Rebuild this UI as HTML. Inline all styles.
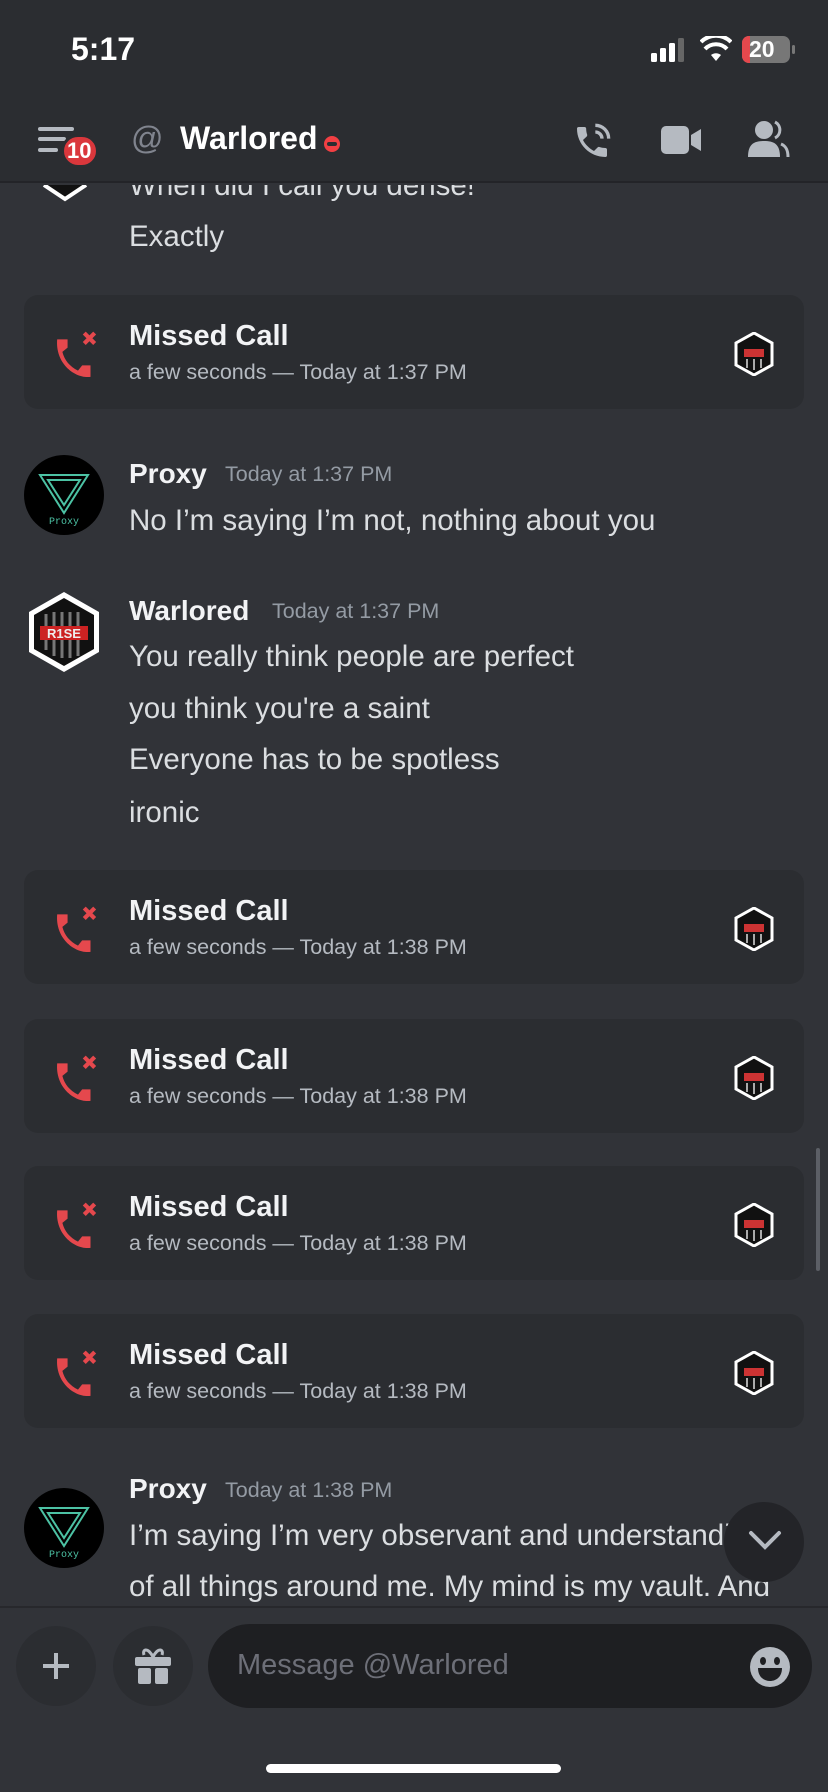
<!DOCTYPE html>
<html><head><meta charset="utf-8"><style>
*{margin:0;padding:0;box-sizing:border-box}
body{width:828px;height:1792px;background:#313338;font-family:"Liberation Sans",sans-serif;color:#dbdee1;position:relative;overflow:hidden}
.abs{position:absolute}
.top{left:0;top:0;width:828px;height:183px;background:#2b2d31;border-bottom:2px solid #232428}
.t{position:absolute;white-space:nowrap}
.msg{font-size:29.5px;color:#dbdee1}
.name{font-size:28px;font-weight:bold;color:#f2f3f5}
.ts{font-size:21.5px;color:#949ba4}
.card{position:absolute;left:24px;width:780px;height:114px;background:#2b2d31;border-radius:14px}
.card .ti{left:105px;top:25px;font-size:29px;font-weight:bold;color:#f2f3f5}
.card .su{left:105px;top:65px;font-size:21.5px;color:#b5bac1}
.card .ic{position:absolute;left:30px;top:36px}
.card .av{position:absolute;left:710px;top:37px}
</style></head><body>
<div class="abs top"></div>
<div class="t" style="left:71px;top:31px;font-size:32px;font-weight:bold;color:#fff">5:17</div>
<svg class="abs" style="left:651px;top:38px" width="40" height="24"><rect x="0" y="15" width="6" height="9" rx="1.5" fill="#fff"/><rect x="9" y="10" width="6" height="14" rx="1.5" fill="#fff"/><rect x="18" y="5" width="6" height="19" rx="1.5" fill="#fff"/><rect x="27" y="0" width="6" height="24" rx="1.5" fill="#666"/></svg>
<svg class="abs" style="left:700px;top:36px" width="32" height="26" viewBox="0 0 32 26"><path d="M16 25 L11 19 A8 8 0 0 1 21 19 Z" fill="#fff"/><path d="M5 13 A15 15 0 0 1 27 13" stroke="#fff" stroke-width="4" fill="none"/><path d="M1 7 A21 21 0 0 1 31 7" stroke="#fff" stroke-width="4" fill="none" transform="translate(0,-1)"/></svg>
<div class="abs" style="left:742px;top:36px;width:48px;height:27px;border-radius:7px;background:#777;overflow:hidden"><div style="width:8px;height:27px;background:#e5484d"></div></div>
<div class="abs" style="left:792px;top:45px;width:3px;height:9px;background:#777;border-radius:2px"></div>
<div class="t" style="left:749px;top:36px;font-size:23px;font-weight:bold;color:#fff">20</div>
<svg class="abs" style="left:38px;top:127px" width="40" height="30"><rect x="0" y="0" width="36" height="4" rx="2" fill="#b5bac1"/><rect x="0" y="10" width="28" height="4" rx="2" fill="#b5bac1"/><rect x="0" y="21" width="20" height="4" rx="2" fill="#b5bac1"/></svg>
<div class="abs" style="left:61px;top:134px;width:38px;height:34px;border-radius:17px;background:#da373c;border:3px solid #2b2d31"></div>
<div class="t" style="left:67px;top:138px;font-size:22px;font-weight:bold;color:#fff">10</div>
<div class="t" style="left:131px;top:120px;font-size:32px;color:#80848e">@</div>
<div class="t" style="left:180px;top:120px;font-size:32px;font-weight:bold;color:#fff">Warlored</div>
<div class="abs" style="left:324px;top:136px;width:16px;height:16px;border-radius:8px;background:#f23f43"><div style="margin:6px 3px;height:4px;background:#2b2d31;border-radius:2px"></div></div>
<svg class="abs" style="left:572px;top:122px" width="40" height="40" viewBox="0 0 24 24"><path d="M6.6 10.8c1.4 2.8 3.8 5.1 6.6 6.6l2.2-2.2c.3-.3.7-.4 1-.2 1.1.4 2.3.6 3.6.6.6 0 1 .4 1 1V20c0 .6-.4 1-1 1C10.6 21 3 13.4 3 4c0-.6.4-1 1-1h3.5c.6 0 1 .4 1 1 0 1.3.2 2.5.6 3.6.1.3 0 .7-.2 1z" fill="#b5bac1"/><path d="M14 2a8 8 0 0 1 8 8M14 6a4 4 0 0 1 4 4" stroke="#b5bac1" stroke-width="2" fill="none"/></svg>
<svg class="abs" style="left:661px;top:124px" width="42" height="32" viewBox="0 0 42 32"><rect x="0" y="2" width="28" height="28" rx="5" fill="#b5bac1"/><path d="M30 11 L40 5 V27 L30 21Z" fill="#b5bac1"/></svg>
<svg class="abs" style="left:748px;top:120px" width="42" height="38" viewBox="0 0 42 38"><circle cx="16" cy="10" r="9" fill="#b5bac1"/><path d="M0 37 C0 24 6 21 16 21 C26 21 32 24 32 37Z" fill="#b5bac1"/><path d="M27 2 A9 9 0 0 1 27 18 M33 24 C38 26 40 30 40 37" stroke="#b5bac1" stroke-width="3" fill="none"/></svg>
<div style="position:absolute;left:0;top:185px;width:828px;height:1420px;overflow:hidden">
<div class="t msg" style="left:129px;top:-16px">When did I call you dense!</div>
<div class="t msg" style="left:129px;top:35px">Exactly</div>
</div>
<svg class="abs" style="left:40px;top:185px" width="50" height="18"><path d="M4 0 L25 14 L46 0" stroke="#fff" stroke-width="4" fill="#111"/></svg>

<div class="card" style="top:295px"><svg class="ic" width="48" height="50" viewBox="0 0 44 48"><path d="M2 6 L12 6 L12 14 L7 18 C9 26 14 32 22 36 L26 31 L34 31 L34 42 C20 44 0 30 2 6Z" fill="#e5484d" transform="translate(0,2)"/><path d="M28 2 L38 12 M38 2 L28 12" stroke="#e5484d" stroke-width="4"/></svg><div class="t ti">Missed Call</div><div class="t su">a few seconds — Today at 1:37 PM</div>
<svg class="av" width="40" height="44" viewBox="0 0 40 44"><path d="M20 1 L38 11 V33 L20 43 L2 33 V11Z" fill="#111" stroke="#fff" stroke-width="3"/><rect x="10" y="17" width="20" height="8" fill="#c33"/><path d="M13 27 V36 M20 27 V38 M27 27 V36" stroke="#aaa" stroke-width="2"/></svg></div>

<svg class="abs" style="left:24px;top:455px" width="80" height="80" viewBox="0 0 80 80"><circle cx="40" cy="40" r="40" fill="#000"/><path d="M16 20 L64 20 L40 58Z M24 25 L56 25 L40 50Z" stroke="#4cc2a4" stroke-width="2" fill="none"/><text x="40" y="69" font-size="10" fill="#4cc2a4" text-anchor="middle" font-family="Liberation Mono">Proxy</text></svg>
<div class="t name" style="left:129px;top:458px">Proxy</div>
<div class="t ts" style="left:225px;top:462px">Today at 1:37 PM</div>
<div class="t msg" style="left:129px;top:504px">No I’m saying I’m not, nothing about you</div>

<svg class="abs" style="left:26px;top:590px" width="76" height="84" viewBox="0 0 76 84"><path d="M38 2 L73 22 V62 L38 82 L3 62 V22Z" fill="#fff"/><path d="M38 8 L68 25 V59 L38 76 L8 59 V25Z" fill="#111"/><path d="M20 24 V60 M28 22 V66 M36 22 V68 M44 22 V68 M52 22 V66" stroke="#777" stroke-width="3"/><rect x="14" y="36" width="48" height="14" fill="#c22"/><text x="38" y="48" font-size="13" font-weight="bold" fill="#eee" text-anchor="middle">R1SE</text></svg>
<div class="t name" style="left:129px;top:595px">Warlored</div>
<div class="t ts" style="left:272px;top:599px">Today at 1:37 PM</div>
<div class="t msg" style="left:129px;top:640px">You really think people are perfect</div>
<div class="t msg" style="left:129px;top:692px">you think you're a saint</div>
<div class="t msg" style="left:129px;top:743px">Everyone has to be spotless</div>
<div class="t msg" style="left:129px;top:796px">ironic</div>

<div class="card" style="top:870px"><svg class="ic" width="48" height="50" viewBox="0 0 44 48"><path d="M2 6 L12 6 L12 14 L7 18 C9 26 14 32 22 36 L26 31 L34 31 L34 42 C20 44 0 30 2 6Z" fill="#e5484d" transform="translate(0,2)"/><path d="M28 2 L38 12 M38 2 L28 12" stroke="#e5484d" stroke-width="4"/></svg><div class="t ti">Missed Call</div><div class="t su">a few seconds — Today at 1:38 PM</div>
<svg class="av" width="40" height="44" viewBox="0 0 40 44"><path d="M20 1 L38 11 V33 L20 43 L2 33 V11Z" fill="#111" stroke="#fff" stroke-width="3"/><rect x="10" y="17" width="20" height="8" fill="#c33"/><path d="M13 27 V36 M20 27 V38 M27 27 V36" stroke="#aaa" stroke-width="2"/></svg></div>
<div class="card" style="top:1019px"><svg class="ic" width="48" height="50" viewBox="0 0 44 48"><path d="M2 6 L12 6 L12 14 L7 18 C9 26 14 32 22 36 L26 31 L34 31 L34 42 C20 44 0 30 2 6Z" fill="#e5484d" transform="translate(0,2)"/><path d="M28 2 L38 12 M38 2 L28 12" stroke="#e5484d" stroke-width="4"/></svg><div class="t ti">Missed Call</div><div class="t su">a few seconds — Today at 1:38 PM</div>
<svg class="av" width="40" height="44" viewBox="0 0 40 44"><path d="M20 1 L38 11 V33 L20 43 L2 33 V11Z" fill="#111" stroke="#fff" stroke-width="3"/><rect x="10" y="17" width="20" height="8" fill="#c33"/><path d="M13 27 V36 M20 27 V38 M27 27 V36" stroke="#aaa" stroke-width="2"/></svg></div>
<div class="card" style="top:1166px"><svg class="ic" width="48" height="50" viewBox="0 0 44 48"><path d="M2 6 L12 6 L12 14 L7 18 C9 26 14 32 22 36 L26 31 L34 31 L34 42 C20 44 0 30 2 6Z" fill="#e5484d" transform="translate(0,2)"/><path d="M28 2 L38 12 M38 2 L28 12" stroke="#e5484d" stroke-width="4"/></svg><div class="t ti">Missed Call</div><div class="t su">a few seconds — Today at 1:38 PM</div>
<svg class="av" width="40" height="44" viewBox="0 0 40 44"><path d="M20 1 L38 11 V33 L20 43 L2 33 V11Z" fill="#111" stroke="#fff" stroke-width="3"/><rect x="10" y="17" width="20" height="8" fill="#c33"/><path d="M13 27 V36 M20 27 V38 M27 27 V36" stroke="#aaa" stroke-width="2"/></svg></div>
<div class="card" style="top:1314px"><svg class="ic" width="48" height="50" viewBox="0 0 44 48"><path d="M2 6 L12 6 L12 14 L7 18 C9 26 14 32 22 36 L26 31 L34 31 L34 42 C20 44 0 30 2 6Z" fill="#e5484d" transform="translate(0,2)"/><path d="M28 2 L38 12 M38 2 L28 12" stroke="#e5484d" stroke-width="4"/></svg><div class="t ti">Missed Call</div><div class="t su">a few seconds — Today at 1:38 PM</div>
<svg class="av" width="40" height="44" viewBox="0 0 40 44"><path d="M20 1 L38 11 V33 L20 43 L2 33 V11Z" fill="#111" stroke="#fff" stroke-width="3"/><rect x="10" y="17" width="20" height="8" fill="#c33"/><path d="M13 27 V36 M20 27 V38 M27 27 V36" stroke="#aaa" stroke-width="2"/></svg></div>

<div class="abs" style="left:816px;top:1148px;width:4px;height:123px;border-radius:2px;background:#5c5f66"></div>

<svg class="abs" style="left:24px;top:1488px" width="80" height="80" viewBox="0 0 80 80"><circle cx="40" cy="40" r="40" fill="#000"/><path d="M16 20 L64 20 L40 58Z M24 25 L56 25 L40 50Z" stroke="#4cc2a4" stroke-width="2" fill="none"/><text x="40" y="69" font-size="10" fill="#4cc2a4" text-anchor="middle" font-family="Liberation Mono">Proxy</text></svg>
<div class="t name" style="left:129px;top:1473px">Proxy</div>
<div class="t ts" style="left:225px;top:1478px">Today at 1:38 PM</div>
<div style="position:absolute;left:0;top:1500px;width:828px;height:106px;overflow:hidden">
<div class="t msg" style="left:129px;top:19px">I’m saying I’m very observant and understanding</div>
<div class="t msg" style="left:129px;top:70px">of all things around me. My mind is my vault. And</div>
<div class="t msg" style="left:129px;top:121px">if you think what you do or ask me you can't point</div>
</div>
<div class="abs" style="left:724px;top:1502px;width:80px;height:80px;border-radius:40px;background:#232428"></div>
<svg class="abs" style="left:748px;top:1530px" width="34" height="22"><path d="M3 3 L17 17 L31 3" stroke="#b5bac1" stroke-width="4" fill="none" stroke-linecap="round"/></svg>

<div class="abs" style="left:0;top:1606px;width:828px;height:186px;background:#313338;border-top:2px solid #27282c"></div>
<div class="abs" style="left:16px;top:1626px;width:80px;height:80px;border-radius:40px;background:#2b2d31"></div>
<svg class="abs" style="left:40px;top:1650px" width="32" height="32"><path d="M16 3 V29 M3 16 H29" stroke="#b5bac1" stroke-width="4"/></svg>
<div class="abs" style="left:113px;top:1626px;width:80px;height:80px;border-radius:40px;background:#2b2d31"></div>
<svg class="abs" style="left:134px;top:1645px" width="38" height="40" viewBox="0 0 38 40"><path d="M19 12 C14 2 8 4 10 10 M19 12 C24 2 30 4 28 10" stroke="#b5bac1" stroke-width="3" fill="none"/><rect x="1" y="12" width="36" height="9" rx="2" fill="#b5bac1"/><rect x="4" y="23" width="13" height="16" rx="2" fill="#b5bac1"/><rect x="21" y="23" width="13" height="16" rx="2" fill="#b5bac1"/></svg>
<div class="abs" style="left:208px;top:1624px;width:604px;height:84px;border-radius:42px;background:#1e1f22"></div>
<div class="t" style="left:237px;top:1649px;font-size:29px;color:#6d6f78">Message @Warlored</div>
<svg class="abs" style="left:750px;top:1647px" width="40" height="40" viewBox="0 0 40 40"><circle cx="20" cy="20" r="20" fill="#b5bac1"/><ellipse cx="13" cy="14" rx="3" ry="4" fill="#1e1f22"/><ellipse cx="27" cy="14" rx="3" ry="4" fill="#1e1f22"/><path d="M8 21 H32 C32 30 26 34 20 34 C14 34 8 30 8 21Z" fill="#1e1f22"/></svg>
<div class="abs" style="left:266px;top:1764px;width:295px;height:9px;border-radius:5px;background:#fff"></div>
</body></html>
